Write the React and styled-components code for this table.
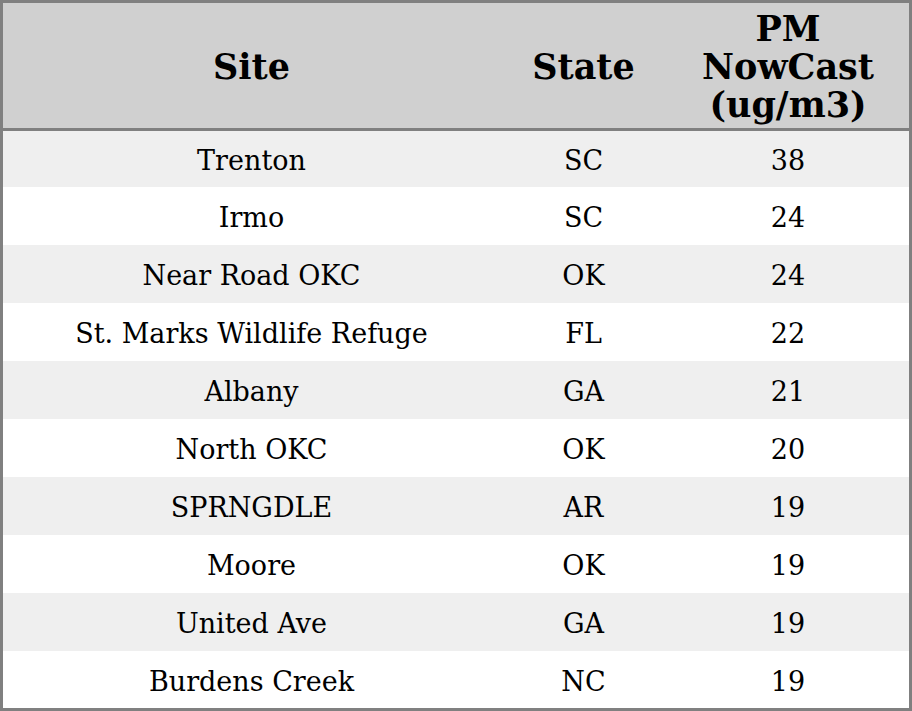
import React from "react";
import styled, { createGlobalStyle } from "styled-components";

const rows = [
  { site: "Trenton", state: "SC", pm: 38 },
  { site: "Irmo", state: "SC", pm: 24 },
  { site: "Near Road OKC", state: "OK", pm: 24 },
  { site: "St. Marks Wildlife Refuge", state: "FL", pm: 22 },
  { site: "Albany", state: "GA", pm: 21 },
  { site: "North OKC", state: "OK", pm: 20 },
  { site: "SPRNGDLE", state: "AR", pm: 19 },
  { site: "Moore", state: "OK", pm: 19 },
  { site: "United Ave", state: "GA", pm: 19 },
  { site: "Burdens Creek", state: "NC", pm: 19 },
];

const App = () => {
  return (
    <>
      <GlobalStyle />
      <Table>
        <thead>
          <tr>
            <HeadCell>Site</HeadCell>
            <HeadCell>State</HeadCell>
            <HeadCell>
              PM
              <br />
              NowCast
              <br />
              (ug/m3)
            </HeadCell>
          </tr>
        </thead>
        <tbody>
          {rows.map((r, i) => (
            <Row key={r.site} $striped={i % 2 === 0}>
              <Cell>{r.site}</Cell>
              <Cell>{r.state}</Cell>
              <Cell>{r.pm}</Cell>
            </Row>
          ))}
        </tbody>
      </Table>
    </>
  );
};

const GlobalStyle = createGlobalStyle`
  html, body {
    margin: 0;
    padding: 0;
    background: #ffffff;
  }
`;

const Table = styled.table`
  box-sizing: border-box;
  width: 912px;
  height: 711px;
  border-collapse: separate;
  border-spacing: 0;
  border: 3px solid #808080;
  font-family: "DejaVu Serif", serif;
  color: #000;
  table-layout: fixed;
`;

const HeadCell = styled.th`
  box-sizing: border-box;
  height: 128px;
  padding: 2px 0 0;
  background-color: #d0d0d0;
  border-bottom: 3px solid #808080;
  font-size: 35px;
  font-weight: 700;
  line-height: 38px;
  text-align: center;
  vertical-align: middle;

  &:nth-child(1) {
    width: 497px;
  }
  &:nth-child(2) {
    width: 167px;
  }
`;

const Row = styled.tr`
  background-color: ${(p) => (p.$striped ? "#efefef" : "#ffffff")};
`;

const Cell = styled.td`
  box-sizing: border-box;
  height: 58px;
  padding: 3px 0 0;
  font-size: 27px;
  text-align: center;
  vertical-align: middle;
  white-space: nowrap;

  tr:first-child > & {
    height: 56px;
  }
  tr:last-child > & {
    height: 57px;
  }
`;

export default App;
